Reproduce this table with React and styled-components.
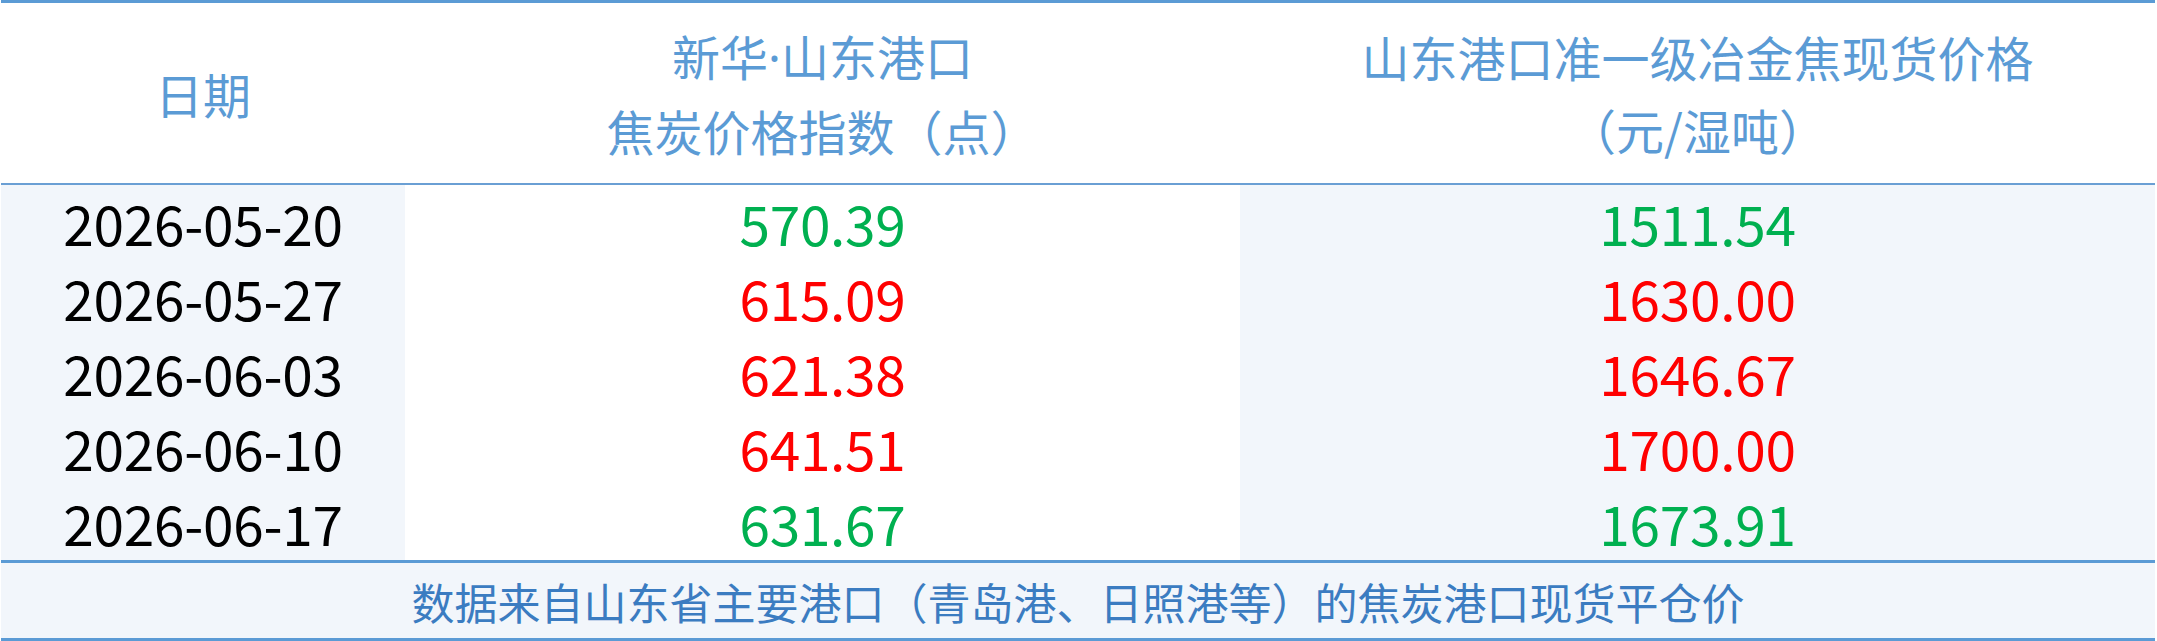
import React from "react";
import styled, { createGlobalStyle } from "styled-components";

const Global = createGlobalStyle`
  html, body { margin: 0; padding: 0; background: #ffffff; }
  body { font-family: "Noto Sans CJK SC", "Noto Sans", sans-serif; }
`;

const Table = styled.div`
  width: 2154px;
  margin-left: 1px;
  border-top: 3px solid #5b9bd5;
  border-bottom: 3px solid #5b9bd5;
  display: grid;
  grid-template-columns: 404px 835px 1fr;
`;

const HeadCell = styled.div`
  height: 180px;
  border-bottom: 2px solid #6a9fd4;
  display: flex;
  flex-direction: column;
  align-items: center;
  justify-content: center;
  color: #5b9bd5;
  font-size: 48px;
  line-height: 73px;
  white-space: nowrap;
  background: #ffffff;
`;

const MidDot = styled.span`
  font-family: "Noto Sans", sans-serif;
`;

const Cell = styled.div`
  height: 75px;
  display: flex;
  align-items: center;
  justify-content: center;
  font-size: 55px;
  line-height: 75px;
  letter-spacing: -0.3px;
  background: ${(p) => (p.$shade ? "#f2f6fb" : "#ffffff")};
  color: ${(p) => p.$color || "#000000"};
`;

const Footer = styled.div`
  grid-column: 1 / -1;
  height: 75px;
  border-top: 3px solid #5b9bd5;
  background: #f2f6fb;
  display: flex;
  align-items: center;
  justify-content: center;
  color: #3b7cc1;
  font-size: 43px;
  white-space: nowrap;
`;

const GREEN = "#00b050";
const RED = "#ff0000";

const rows = [
  ["2026-05-20", "570.39", GREEN, "1511.54", GREEN],
  ["2026-05-27", "615.09", RED, "1630.00", RED],
  ["2026-06-03", "621.38", RED, "1646.67", RED],
  ["2026-06-10", "641.51", RED, "1700.00", RED],
  ["2026-06-17", "631.67", GREEN, "1673.91", GREEN],
];

export default function App() {
  return (
    <>
      <Global />
      <Table>
        <HeadCell>
          <span>日期</span>
        </HeadCell>
        <HeadCell>
          <span>
            新华<MidDot>·</MidDot>山东港口
          </span>
          <span>焦炭价格指数（点）</span>
        </HeadCell>
        <HeadCell>
          <span>山东港口准一级冶金焦现货价格</span>
          <span>（元/湿吨）</span>
        </HeadCell>
        {rows.map((r) => (
          <React.Fragment key={r[0]}>
            <Cell $shade>{r[0]}</Cell>
            <Cell $color={r[2]}>{r[1]}</Cell>
            <Cell $shade $color={r[4]}>{r[3]}</Cell>
          </React.Fragment>
        ))}
        <Footer>数据来自山东省主要港口（青岛港、日照港等）的焦炭港口现货平仓价</Footer>
      </Table>
    </>
  );
}
